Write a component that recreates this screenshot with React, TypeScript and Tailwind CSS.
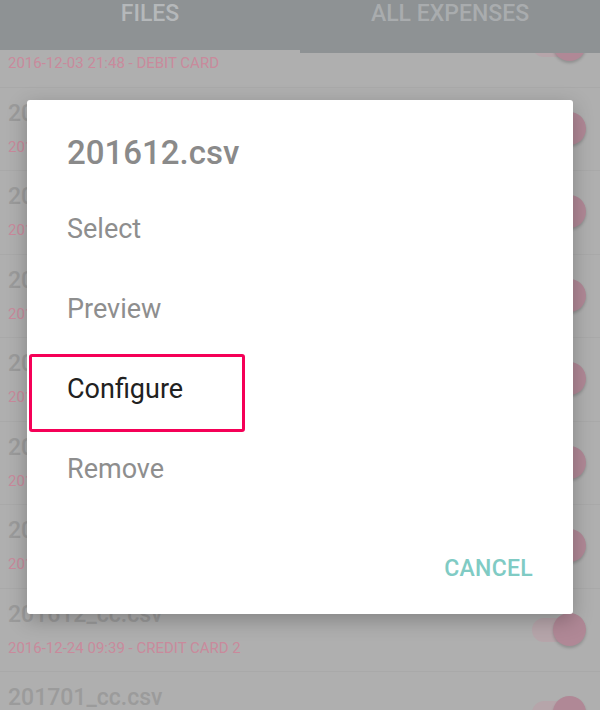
const rows = [
    { name: '201611.csv', meta: '2016-12-03 21:48 - DEBIT CARD' },
    { name: '201612.csv', meta: '2016-12-24 09:39 - DEBIT CARD' },
    { name: '201701.csv', meta: '2017-01-24 10:12 - DEBIT CARD' },
    { name: '201702.csv', meta: '2017-02-24 08:51 - DEBIT CARD' },
    { name: '201609_cc.csv', meta: '2016-10-24 09:05 - CREDIT CARD 2' },
    { name: '201610_cc.csv', meta: '2016-11-24 09:02 - CREDIT CARD 2' },
    { name: '201611_cc.csv', meta: '2016-12-02 18:20 - CREDIT CARD 2' },
    { name: '201612_cc.csv', meta: '2016-12-24 09:39 - CREDIT CARD 2' },
    { name: '201701_cc.csv', meta: '2017-01-24 10:15 - CREDIT CARD 2' },
];

const actions = ['Select', 'Preview', 'Configure', 'Remove'];

const Toggle = () => (
    <div className="relative w-[54px] h-[34px] shrink-0">
        <div className="absolute left-0 top-[5px] w-[44px] h-[24px] rounded-full bg-[#b6a5aa]" />
        <div className="absolute right-0 top-0 w-[33px] h-[33px] rounded-full bg-[#b08896] shadow-[0_2px_3px_rgba(0,0,0,0.18)]" />
    </div>
);

const App = () => {
    return (
        <div className="relative w-[600px] h-[710px] overflow-hidden bg-[#afafaf] flex flex-col" style={{ fontFamily: 'Roboto, "Noto Sans", sans-serif' }}>
            {/* Tabs */}
            <div className="h-[53px] shrink-0 flex bg-[#8e9294] z-10">
                <div className="flex-1 flex flex-col">
                    <div className="flex-1 flex justify-center pt-[1px] text-[23px] leading-[26px] font-medium text-[#b5b8ba]">FILES</div>
                    <div className="h-[3px] bg-[#afafaf]" />
                </div>
                <div className="flex-1 flex justify-center pt-[1px] text-[23px] leading-[26px] font-medium text-[#a9acae]">ALL EXPENSES</div>
            </div>

            {/* File list */}
            <div className="flex-1 overflow-hidden">
                <div className="-mt-[50px]">
                    {rows.map((r) => (
                        <div key={r.name} className="h-[83.5px] border-t border-[#a9a9a9] flex items-center pl-[8px] pr-[14px]">
                            <div className="flex-1 self-start pt-[12px]">
                                <div className="text-[23px] leading-[28px] font-medium text-[#9b9b9b]">{r.name}</div>
                                <div className="mt-[9px] text-[15px] leading-[20px] text-[#c98a9c]">{r.meta}</div>
                            </div>
                            <Toggle />
                        </div>
                    ))}
                </div>
            </div>

            {/* Dialog */}
            <div className="absolute inset-0 z-20 flex items-center justify-center">
                <div className="mt-[4px] w-[546px] h-[514px] bg-white rounded-[3px] shadow-[0_6px_20px_rgba(0,0,0,0.25)] flex flex-col pt-[33px]">
                    <h2 className="pl-[40px] text-[33px] leading-[40px] font-medium text-[#8a8a8a]">201612.csv</h2>
                    <div className="mt-[16px]">
                        {actions.map((a) => (
                            <div key={a} className="relative h-[80px] flex items-center pl-[40px]">
                                <span className={`text-[27px] ${a === 'Configure' ? 'text-[#212121]' : 'text-[#8e8e8e]'}`}>{a}</span>
                                {a === 'Configure' && (
                                    <div className="absolute left-[2px] top-[5px] w-[216px] h-[78px] border-[3px] border-[#f50057] rounded-[3px]" />
                                )}
                            </div>
                        ))}
                    </div>
                    <div className="mt-[36px] flex justify-end pr-[40px]">
                        <button className="h-[48px] text-[23px] tracking-[0.3px] font-medium text-[#80cbc4]">CANCEL</button>
                    </div>
                </div>
            </div>
        </div>
    );
};

export default App;
